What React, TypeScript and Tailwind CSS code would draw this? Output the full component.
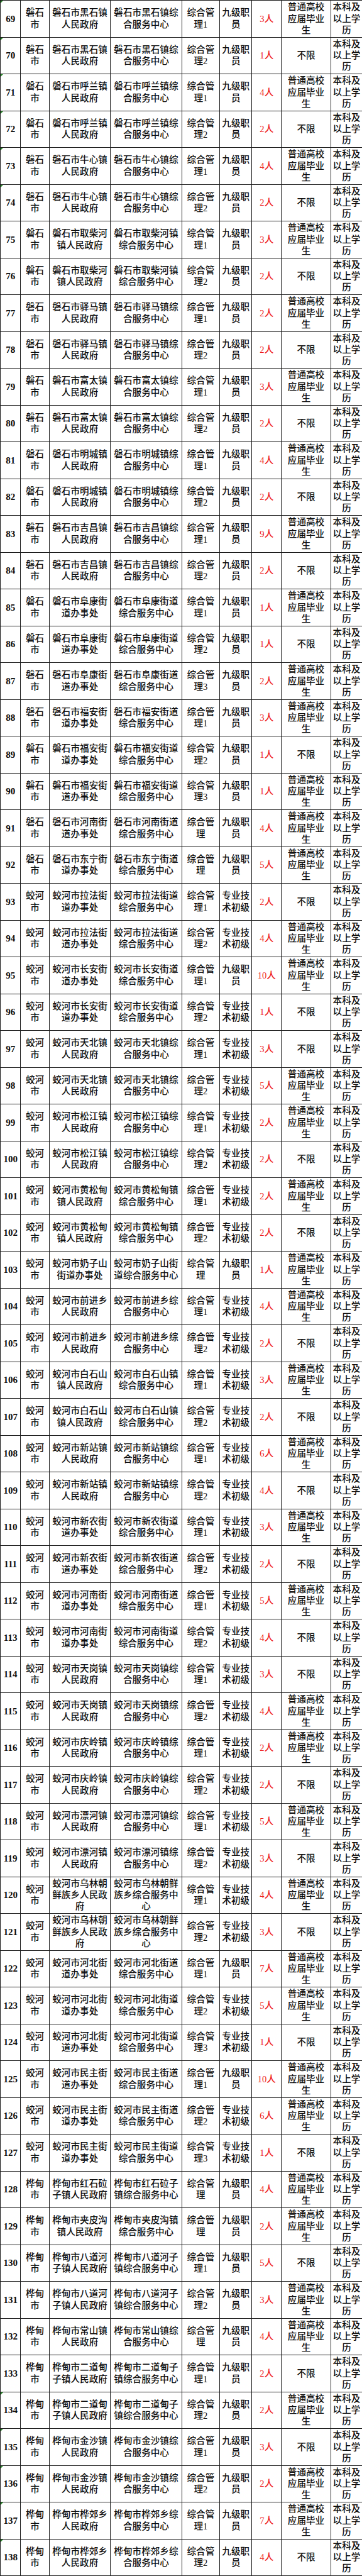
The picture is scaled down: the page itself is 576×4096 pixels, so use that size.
import React from 'react';

type Row = {
  no: number;
  city: string;
  place: string; // e.g. 黑石镇 / 阜康街道 / 前进乡
  post: string;
  tech: boolean;
  count: number;
  fresh: boolean;
};

// 岗位信息 69-138
const raw: [number, string, string, string, 0 | 1, number, 0 | 1][] = [
  [69, '磐石', '黑石镇', '综合管理1', 0, 3, 1],
  [70, '磐石', '黑石镇', '综合管理2', 0, 1, 0],
  [71, '磐石', '呼兰镇', '综合管理1', 0, 4, 1],
  [72, '磐石', '呼兰镇', '综合管理2', 0, 2, 0],
  [73, '磐石', '牛心镇', '综合管理1', 0, 4, 1],
  [74, '磐石', '牛心镇', '综合管理2', 0, 2, 0],
  [75, '磐石', '取柴河镇', '综合管理1', 0, 3, 1],
  [76, '磐石', '取柴河镇', '综合管理2', 0, 2, 0],
  [77, '磐石', '驿马镇', '综合管理1', 0, 2, 1],
  [78, '磐石', '驿马镇', '综合管理2', 0, 2, 0],
  [79, '磐石', '富太镇', '综合管理1', 0, 3, 1],
  [80, '磐石', '富太镇', '综合管理2', 0, 2, 0],
  [81, '磐石', '明城镇', '综合管理1', 0, 4, 1],
  [82, '磐石', '明城镇', '综合管理2', 0, 2, 0],
  [83, '磐石', '吉昌镇', '综合管理1', 0, 9, 1],
  [84, '磐石', '吉昌镇', '综合管理2', 0, 2, 0],
  [85, '磐石', '阜康街道', '综合管理1', 0, 1, 1],
  [86, '磐石', '阜康街道', '综合管理2', 0, 1, 0],
  [87, '磐石', '阜康街道', '综合管理3', 0, 2, 1],
  [88, '磐石', '福安街道', '综合管理1', 0, 3, 1],
  [89, '磐石', '福安街道', '综合管理2', 0, 1, 0],
  [90, '磐石', '福安街道', '综合管理3', 0, 1, 1],
  [91, '磐石', '河南街道', '综合管理', 0, 4, 1],
  [92, '磐石', '东宁街道', '综合管理', 0, 5, 1],
  [93, '蛟河', '拉法街道', '综合管理1', 1, 2, 0],
  [94, '蛟河', '拉法街道', '综合管理2', 1, 4, 1],
  [95, '蛟河', '长安街道', '综合管理1', 0, 10, 1],
  [96, '蛟河', '长安街道', '综合管理2', 1, 1, 0],
  [97, '蛟河', '天北镇', '综合管理1', 1, 3, 0],
  [98, '蛟河', '天北镇', '综合管理2', 1, 5, 1],
  [99, '蛟河', '松江镇', '综合管理1', 1, 2, 1],
  [100, '蛟河', '松江镇', '综合管理2', 1, 2, 0],
  [101, '蛟河', '黄松甸镇', '综合管理1', 1, 2, 1],
  [102, '蛟河', '黄松甸镇', '综合管理2', 1, 2, 0],
  [103, '蛟河', '奶子山街道', '综合管理', 0, 1, 1],
  [104, '蛟河', '前进乡', '综合管理1', 1, 4, 1],
  [105, '蛟河', '前进乡', '综合管理2', 1, 2, 0],
  [106, '蛟河', '白石山镇', '综合管理1', 1, 3, 1],
  [107, '蛟河', '白石山镇', '综合管理2', 1, 2, 0],
  [108, '蛟河', '新站镇', '综合管理1', 1, 6, 1],
  [109, '蛟河', '新站镇', '综合管理2', 1, 4, 0],
  [110, '蛟河', '新农街道', '综合管理1', 1, 3, 1],
  [111, '蛟河', '新农街道', '综合管理2', 1, 2, 0],
  [112, '蛟河', '河南街道', '综合管理1', 1, 5, 1],
  [113, '蛟河', '河南街道', '综合管理2', 1, 4, 0],
  [114, '蛟河', '天岗镇', '综合管理1', 1, 3, 0],
  [115, '蛟河', '天岗镇', '综合管理2', 1, 4, 1],
  [116, '蛟河', '庆岭镇', '综合管理1', 1, 2, 1],
  [117, '蛟河', '庆岭镇', '综合管理2', 1, 2, 0],
  [118, '蛟河', '漂河镇', '综合管理1', 1, 5, 1],
  [119, '蛟河', '漂河镇', '综合管理2', 1, 3, 0],
  [120, '蛟河', '乌林朝鲜族乡', '综合管理1', 1, 4, 1],
  [121, '蛟河', '乌林朝鲜族乡', '综合管理2', 1, 3, 0],
  [122, '蛟河', '河北街道', '综合管理1', 0, 7, 1],
  [123, '蛟河', '河北街道', '综合管理2', 1, 5, 1],
  [124, '蛟河', '河北街道', '综合管理3', 1, 1, 0],
  [125, '蛟河', '民主街道', '综合管理1', 0, 10, 1],
  [126, '蛟河', '民主街道', '综合管理2', 1, 6, 1],
  [127, '蛟河', '民主街道', '综合管理3', 1, 1, 0],
  [128, '桦甸', '红石砬子镇', '综合管理', 0, 4, 1],
  [129, '桦甸', '夹皮沟镇', '综合管理', 0, 2, 1],
  [130, '桦甸', '八道河子镇', '综合管理1', 0, 5, 0],
  [131, '桦甸', '八道河子镇', '综合管理2', 0, 3, 1],
  [132, '桦甸', '常山镇', '综合管理', 0, 4, 1],
  [133, '桦甸', '二道甸子镇', '综合管理1', 0, 2, 0],
  [134, '桦甸', '二道甸子镇', '综合管理2', 0, 2, 1],
  [135, '桦甸', '金沙镇', '综合管理1', 0, 3, 0],
  [136, '桦甸', '金沙镇', '综合管理2', 0, 2, 1],
  [137, '桦甸', '桦郊乡', '综合管理1', 0, 7, 1],
  [138, '桦甸', '桦郊乡', '综合管理2', 0, 4, 0],
];

const rows: Row[] = raw.map(([no, city, place, post, tech, count, fresh]) => ({
  no,
  city,
  place,
  post,
  tech: tech === 1,
  count,
  fresh: fresh === 1,
}));

// cells with a little green marker in the corner
const flagged = new Set([69, 70, 71, 72, 73, 74, 134, 135, 136, 137, 138]);

const chunk = (s: string, n: number) => {
  const chars = Array.from(s);
  const out: string[] = [];
  for (let i = 0; i < chars.length; i += n) out.push(chars.slice(i, i + n).join(''));
  return out.join('\n');
};

const Cell: React.FC<{ children: React.ReactNode; className?: string }> = ({ children, className = '' }) => (
  <div
    className={`flex items-center justify-center text-center whitespace-pre border-r border-[#1c1c1c] overflow-hidden ${className}`}
  >
    {children}
  </div>
);

const App: React.FC = () => {
  return (
    <div
      className="w-[576px] bg-white text-[#0d0d0d] text-[14.6px] leading-[18.4px] font-medium border-t border-[#1c1c1c]"
      style={{ fontFamily: '"Liberation Serif", "Noto Sans CJK SC", serif' }}
    >
      {rows.map((r) => {
        const isStreet = r.place.endsWith('街道');
        const unit = `${r.city}市${r.place}${isStreet ? '办事处' : '人民政府'}`;
        const dept = `${r.city}市${r.place}综合服务中心`;
        return (
          <div
            key={r.no}
            className="grid grid-cols-[32.3px_45.6px_97.3px_113.5px_60.3px_51.5px_46.6px_78.9px_1fr] h-[58.5px] border-b border-l border-[#1c1c1c]"
          >
            <Cell className="relative text-[15px] font-semibold">
              {flagged.has(r.no) && (
                <span className="absolute left-0 top-0 w-0 h-0 border-t-[4px] border-r-[4px] border-t-[#2e8b2e] border-r-transparent" />
              )}
              {r.no}
            </Cell>
            <Cell>{`${r.city}\n市`}</Cell>
            <Cell>{chunk(unit, 6)}</Cell>
            <Cell>{chunk(dept, 7)}</Cell>
            <Cell>{chunk(r.post, 3)}</Cell>
            <Cell>{r.tech ? '专业技\n术初级' : '九级职\n员'}</Cell>
            <Cell className="text-[#ee1c1c]">{`${r.count}人`}</Cell>
            <Cell>{r.fresh ? '普通高校\n应届毕业\n生' : '不限'}</Cell>
            <Cell className="border-r-0">{'本科及\n以上学\n历'}</Cell>
          </div>
        );
      })}
    </div>
  );
};

export default App;
